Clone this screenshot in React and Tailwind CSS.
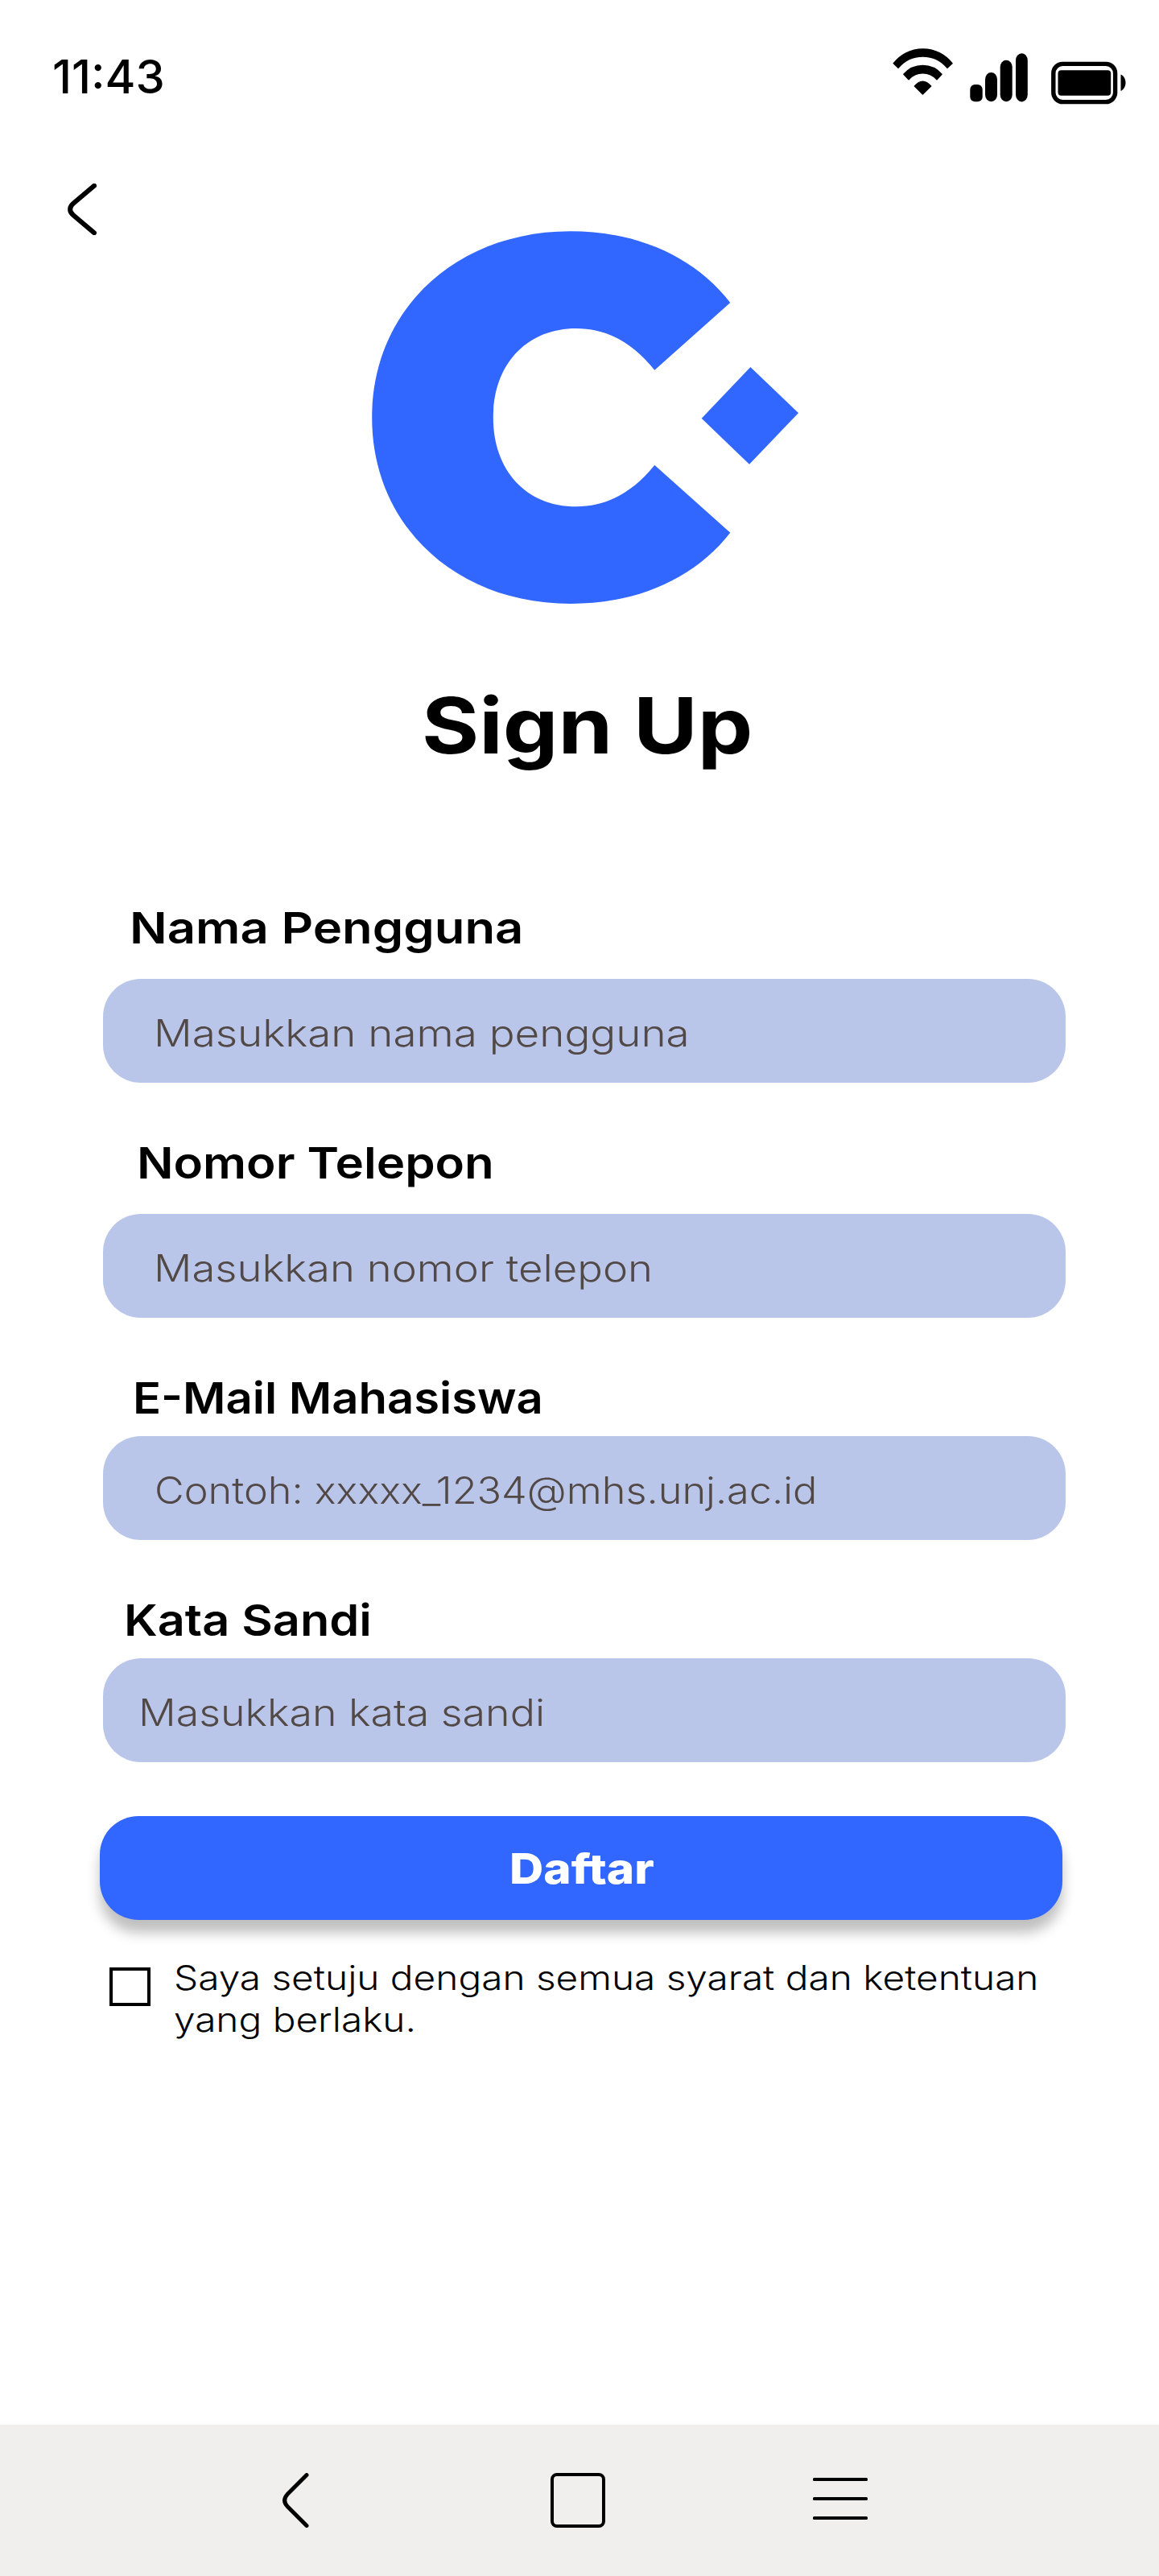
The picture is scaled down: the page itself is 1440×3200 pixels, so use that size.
import React from 'react';

const fields = [
  { label: 'Nama Pengguna', hint: 'Masukkan nama pengguna', labelCls: 'ml-[33.4px] scale-x-[1.14]', gap: 'mt-[35.6px]', hintCls: 'ml-[63.2px] scale-x-[1.151]' },
  { label: 'Nomor Telepon', hint: 'Masukkan nomor telepon', labelCls: 'ml-[42.4px] scale-x-[1.111]', gap: 'mt-[35.6px]', hintCls: 'ml-[63.2px] scale-x-[1.144]' },
  { label: 'E-Mail Mahasiswa', hint: 'Contoh: xxxxx_1234@mhs.unj.ac.id', labelCls: 'ml-[36.9px] scale-x-[1.073]', gap: 'mt-[19.6px]', hintCls: 'ml-[63.5px] scale-x-[1.096]' },
  { label: 'Kata Sandi', hint: 'Masukkan kata sandi', labelCls: 'ml-[26px] scale-x-[1.1]', gap: 'mt-[19.6px]', hintCls: 'ml-[44px] scale-x-[1.128]' },
];

function WifiIcon() {
  return (
    <svg className="h-[60px] w-[76px]" viewBox="1108 59 76 60" stroke="#000" strokeWidth="1.5" strokeLinejoin="round">
      <path d="M1110.3 78.7A46 46 0 0 1 1183 78.7L1177 84.3A39.5 39.5 0 0 0 1116 84.3Z" />
      <path d="M1122.9 92.3A31 31 0 0 1 1170 92.3L1164 98.8A23 23 0 0 0 1129 98.8Z" />
      <path d="M1136.4 107Q1146.4 95.5 1156.6 107L1146.4 117Z" />
    </svg>
  );
}

function SignalIcon() {
  return (
    <svg className="h-[61px] w-[72px]" viewBox="1205 66 72 61">
      <rect x="1205.3" y="105" width="15.4" height="21.2" rx="6" />
      <rect x="1224" y="90" width="15" height="36.2" rx="7.5" ry="8.5" />
      <rect x="1242.7" y="74.7" width="15" height="51.5" rx="7.5" ry="8.5" />
      <rect x="1262" y="66.2" width="14.8" height="60.2" rx="7.4" ry="9" />
    </svg>
  );
}

function BatteryIcon() {
  return (
    <svg className="h-[54px] w-[93px]" viewBox="1305.5 75.5 93 54">
      <rect x="1308.3" y="78.9" width="76.8" height="47.2" rx="11.5" fill="none" stroke="#000" strokeWidth="5.4" />
      <rect x="1314" y="86.7" width="65.7" height="31.5" rx="4" />
      <path d="M1392 92C1400 96 1400 108.5 1392 112.6Z" />
    </svg>
  );
}

function Logo() {
  return (
    <svg className="h-[464px] w-[532px]" viewBox="461 287 532 464" fill="#3267FF">
      <path d="M907.3 376C863 319 792 287.3 709 287.3C566 287.3 462.2 385 462.2 518.7C462.2 652.4 566 750 709 750C792 750 863 718.5 907.3 661.7L813.3 577.7C786 611.5 754 629.3 716 629.3C654 629.3 612.8 584.5 612.8 518.7C612.8 453 654 408 716 408C754 408 786 425.8 813.3 459.7Z" />
      <path d="M932.4 456L992 513L931 576.7L871.7 519.7Z" />
    </svg>
  );
}

function Field({ label, hint, labelCls, gap, hintCls }) {
  return (
    <div className="mb-[71.07px]">
      <div className="flex h-[56px]">
        <label className={`origin-left whitespace-nowrap text-[54px] leading-[57px] font-semibold text-black ${labelCls}`}>{label}</label>
      </div>
      <div className={`flex h-[129.33px] w-[1196px] items-center rounded-[47px] bg-[#B9C6EA] pt-[5px] ${gap}`}>
        <span className={`origin-left whitespace-nowrap text-[46px] leading-[56px] font-light text-[#524947] ${hintCls}`}>{hint}</span>
      </div>
    </div>
  );
}

export default function App() {
  return (
    <main className="flex h-[3200px] w-[1440px] flex-col overflow-hidden bg-white font-['Inter',sans-serif] text-black">
      <header className="flex h-[228px] items-start">
        <span className="mt-[66px] ml-[64.5px] origin-left scale-x-[1.015] text-[57px] leading-[60px] font-medium">11:43</span>
        <div className="mr-[41.5px] ml-auto flex items-start">
          <div className="mt-[59px]"><WifiIcon /></div>
          <div className="mt-[66px] ml-[21px]"><SignalIcon /></div>
          <div className="mt-[75.5px] ml-[28.5px]"><BatteryIcon /></div>
        </div>
      </header>

      <section className="flex h-[623px] items-start">
        <button className="ml-[84px]" aria-label="Kembali">
          <svg className="block h-[64px] w-[36px]" viewBox="84 228 36 64" fill="none" stroke="#000" strokeWidth="6" strokeLinecap="round" strokeLinejoin="round">
            <path d="M117 230.8L91 252.8C85.8 257.2 85.8 262.8 91 267.2L117 289.2" />
          </svg>
        </button>
        <div className="mt-[59px] ml-[341px]"><Logo /></div>
      </section>

      <h1 className="ml-[524px] h-[100px] w-fit origin-left scale-x-[1.134] whitespace-nowrap text-[96px] leading-[100px] font-bold">Sign Up</h1>

      <form className="mt-[173.4px] ml-[128px]">
        {fields.map((f) => <Field key={f.label} {...f} />)}
      </form>

      <button type="button" className="-mt-[4.3px] ml-[124px] flex h-[129.33px] w-[1196px] shrink-0 items-center justify-center rounded-[48px] bg-[#3267FF] shadow-[0_16px_16px_rgba(0,0,0,0.25)]">
        <span className="ml-[1px] scale-x-[1.124] pt-[2px] text-[52px] leading-[60px] font-extrabold text-white">Daftar</span>
      </button>

      <div className="mt-[45.4px] ml-[136px] flex items-start">
        <span className="mt-[13.3px] h-[48px] w-[51px] shrink-0 border-4 border-black" />
        <p className="ml-[28.5px] origin-left scale-x-[1.137] whitespace-nowrap text-[42px] leading-[52px] font-light">
          Saya setuju dengan semua syarat dan ketentuan<br />yang berlaku.
        </p>
      </div>

      <nav className="mt-auto flex h-[188px] shrink-0 items-start bg-[#F0EFED] pt-[60px]">
        <svg className="ml-[351px] h-[68px] w-[33px]" viewBox="351 3072 33 68" fill="none" stroke="#000" strokeWidth="5" strokeLinecap="round" strokeLinejoin="round">
          <path d="M381 3074.6L357 3098.6C352.6 3103.4 352.6 3108.6 357 3113.4L381 3137.4" />
        </svg>
        <span className="ml-[300px] h-[68px] w-[68px] rounded-[8px] border-4 border-black" />
        <svg className="mt-[6px] ml-[257.5px] h-[52px] w-[68px]" viewBox="0 0 68 52">
          <rect width="68" height="4" rx="1.5" />
          <rect y="24" width="68" height="4" rx="1.5" />
          <rect y="48" width="68" height="4" rx="1.5" />
        </svg>
      </nav>
    </main>
  );
}
